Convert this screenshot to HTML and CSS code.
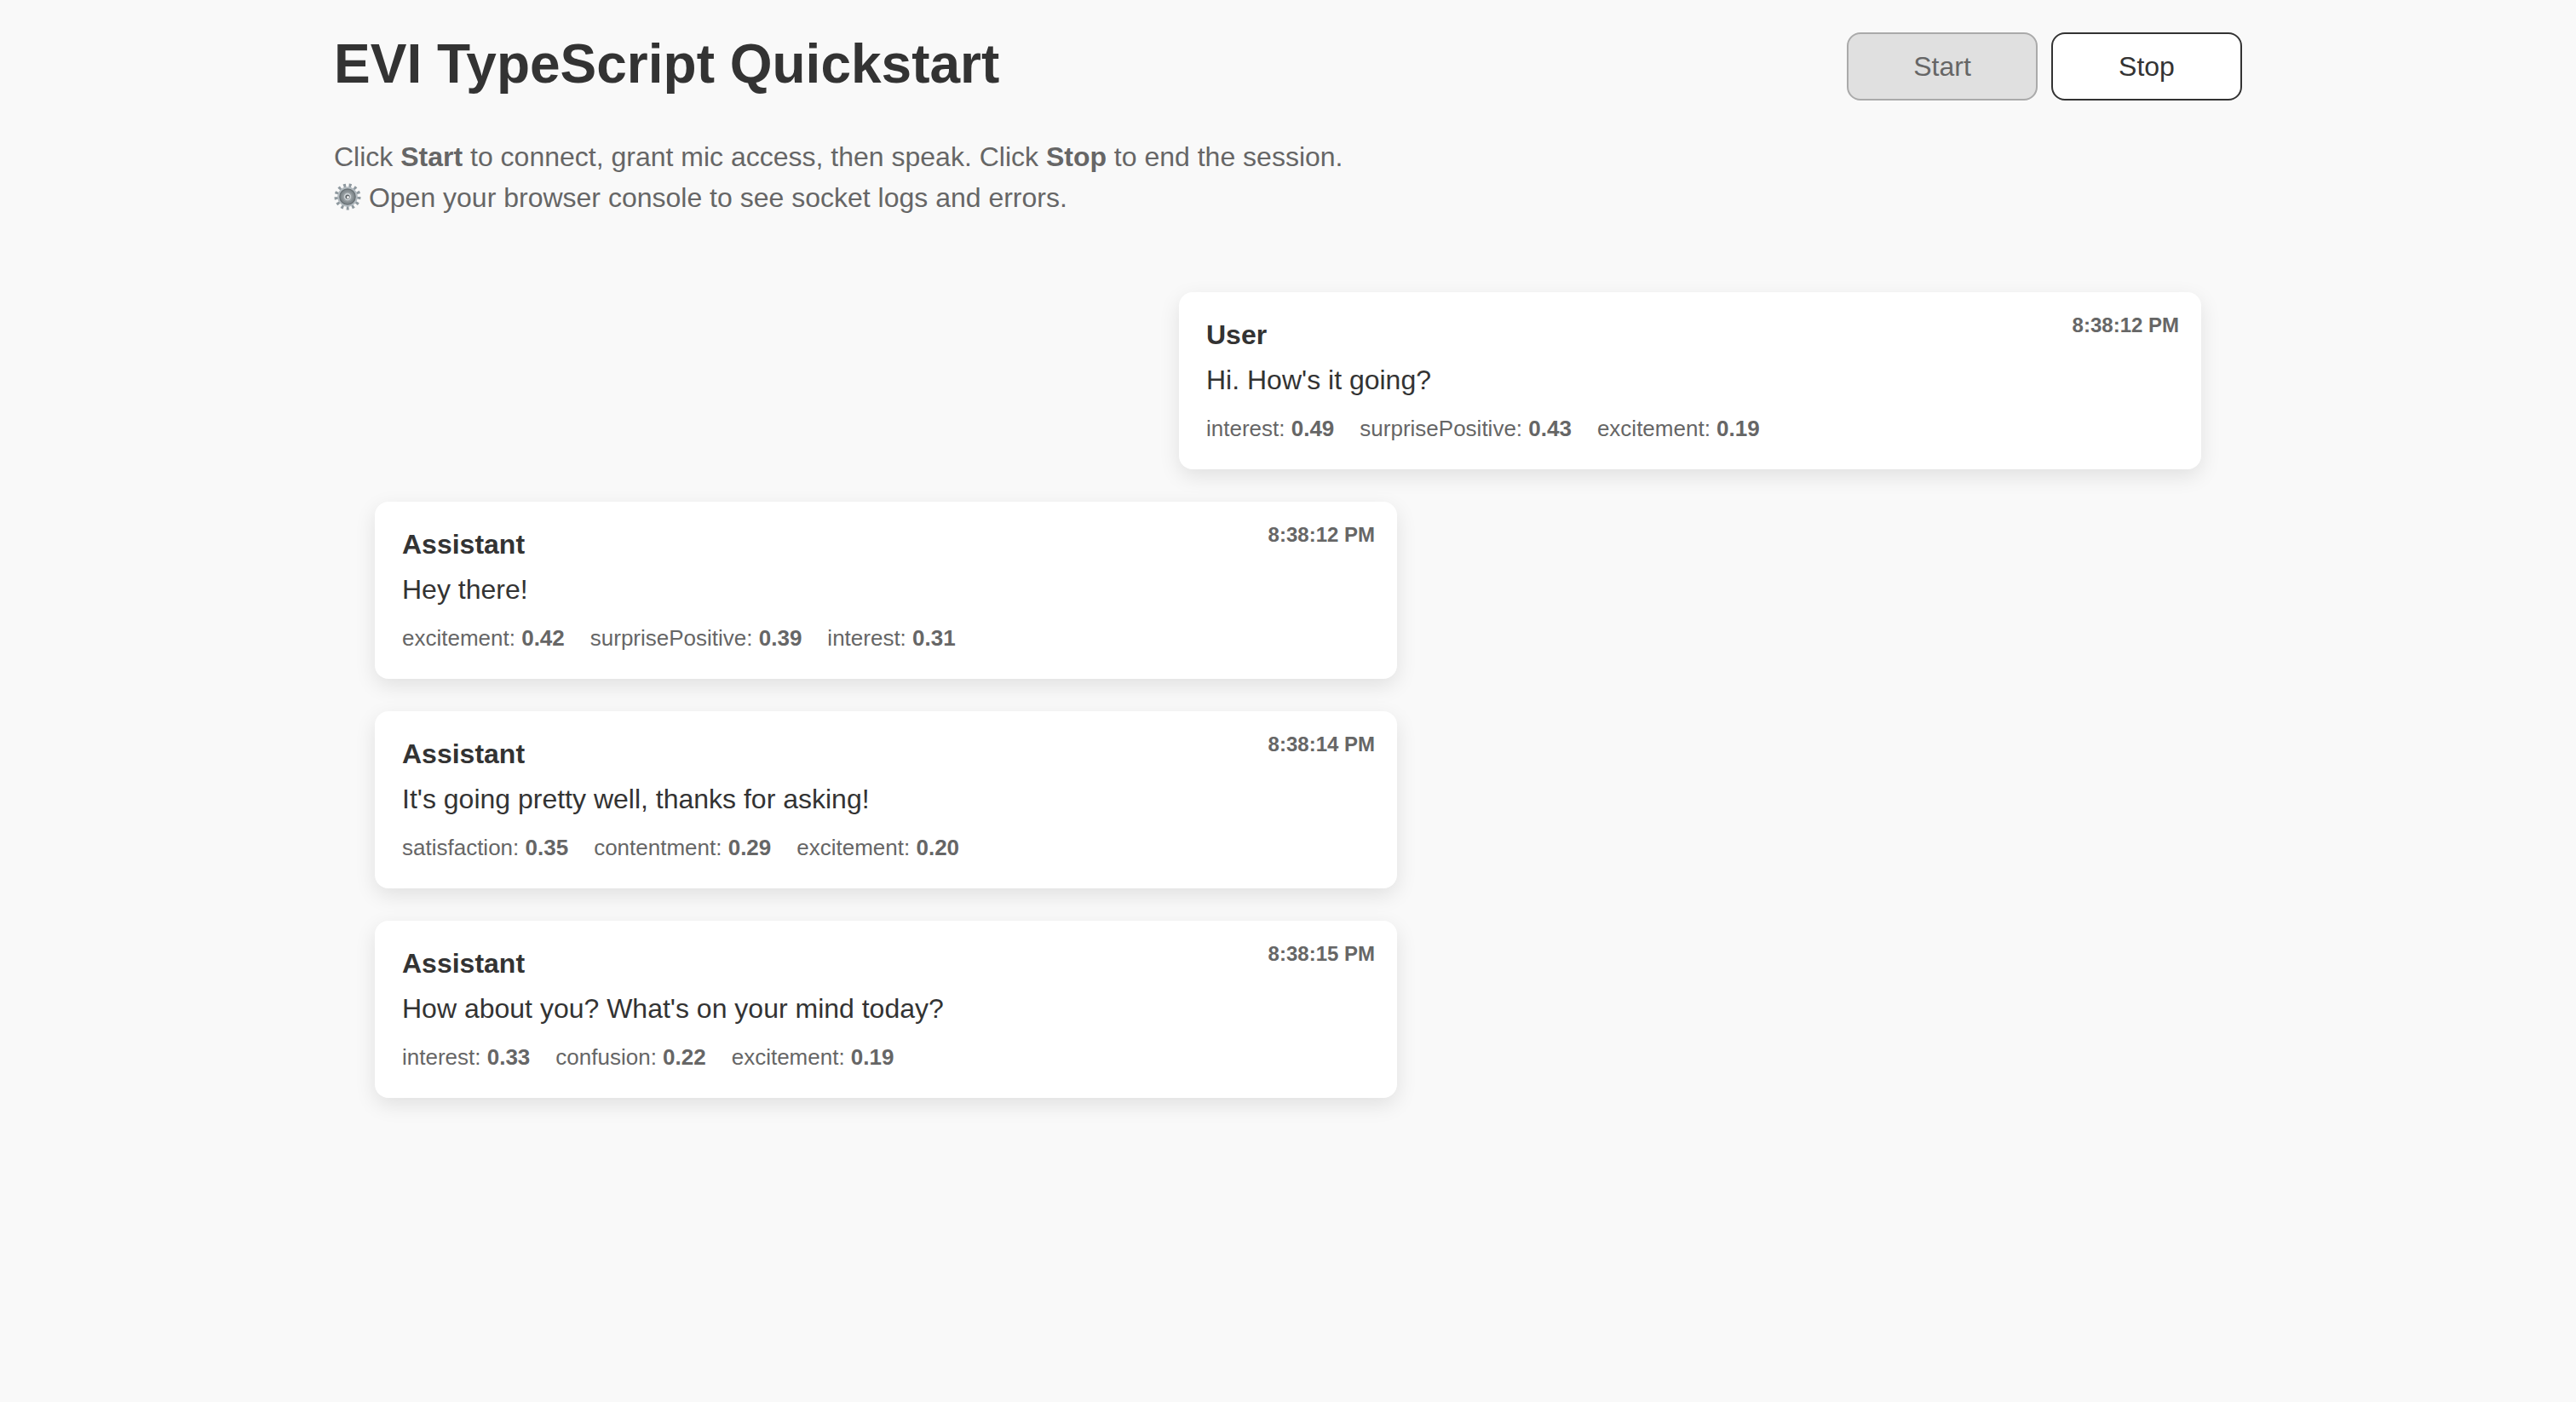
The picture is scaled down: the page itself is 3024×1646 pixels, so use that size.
FILE: index.html
```html
<!DOCTYPE html>
<html lang="en">
<head>
<meta charset="utf-8">
<meta name="viewport" content="width=device-width, initial-scale=1">
<title>EVI TypeScript Quickstart</title>
<link rel="stylesheet" href="styles.css">
</head>
<body>
<div class="app">
  <header class="header">
    <h1 class="title">EVI TypeScript Quickstart</h1>
    <div class="controls">
      <button class="btn" type="button" disabled>Start</button>
      <button class="btn" type="button">Stop</button>
    </div>
  </header>
  <p class="intro">Click <strong>Start</strong> to connect, grant mic access, then speak. Click <strong>Stop</strong> to end the session.<br>
    <svg class="gear" viewBox="0 0 32 32" aria-hidden="true">
      <circle cx="16" cy="16" r="13.2" fill="none" stroke="#8f999f" stroke-width="4.6" pathLength="26" stroke-dasharray="0.9 1.1"/>
      <circle cx="16" cy="16" r="11.8" fill="#b3bbc0"/>
      <circle cx="16" cy="16" r="9" fill="#858d91" stroke="#6c7478" stroke-width="1.6"/>
      <circle cx="16" cy="16" r="6" fill="#989fa2"/>
      <circle cx="16" cy="16" r="3.4" fill="#5c6265" stroke="#cdd3d7" stroke-width="1.6"/>
      <circle cx="16.5" cy="16.5" r="1.5" fill="#f4f4f4"/>
    </svg> Open your browser console to see socket logs and errors.</p>
  <main class="chat">
    <article class="card user">
      <h2 class="role">User</h2>
      <time class="time">8:38:12 PM</time>
      <p class="message">Hi. How's it going?</p>
      <ul class="scores"><li>interest: <strong>0.49</strong></li><li>surprisePositive: <strong>0.43</strong></li><li>excitement: <strong>0.19</strong></li></ul>
    </article>
    <article class="card">
      <h2 class="role">Assistant</h2>
      <time class="time">8:38:12 PM</time>
      <p class="message">Hey there!</p>
      <ul class="scores"><li>excitement: <strong>0.42</strong></li><li>surprisePositive: <strong>0.39</strong></li><li>interest: <strong>0.31</strong></li></ul>
    </article>
    <article class="card">
      <h2 class="role">Assistant</h2>
      <time class="time">8:38:14 PM</time>
      <p class="message">It's going pretty well, thanks for asking!</p>
      <ul class="scores"><li>satisfaction: <strong>0.35</strong></li><li>contentment: <strong>0.29</strong></li><li>excitement: <strong>0.20</strong></li></ul>
    </article>
    <article class="card">
      <h2 class="role">Assistant</h2>
      <time class="time">8:38:15 PM</time>
      <p class="message">How about you? What's on your mind today?</p>
      <ul class="scores"><li>interest: <strong>0.33</strong></li><li>confusion: <strong>0.22</strong></li><li>excitement: <strong>0.19</strong></li></ul>
    </article>
  </main>
</div>
</body>
</html>
```
FILE: styles.css
```css
* {
  box-sizing: border-box;
  margin: 0;
}

body {
  background: #f9f9f9;
  color: #333;
  font: 32px/48px "Liberation Sans", Arial, sans-serif;
}

.app {
  max-width: 2304px;
  margin: 0 auto;
  padding: 38px 32px;
}

.header {
  display: flex;
  justify-content: space-between;
  align-items: flex-start;
  gap: 32px;
}

.title {
  font-size: 64px;
  line-height: 74px;
}

.controls {
  display: flex;
  gap: 16px;
}

.btn {
  width: 224px;
  height: 80px;
  border: 2px solid #333;
  border-radius: 16px;
  background: #fff;
  color: #333;
  font: inherit;
}

.btn:disabled {
  border-color: #aaa;
  background: #e0e0e0;
  color: #666;
}

.intro {
  margin-top: 42px;
  color: #666;
}

.gear {
  width: 32px;
  height: 32px;
  vertical-align: -4px;
}

.chat {
  display: flex;
  flex-direction: column;
  align-items: flex-start;
  gap: 38px;
  margin-top: 39px;
  padding: 48px;
}

.card {
  position: relative;
  width: 100%;
  max-width: 1200px;
  padding: 24px 32px;
  border-radius: 16px;
  background: #fff;
  box-shadow: 0 8px 24px rgba(0, 0, 0, 0.1);
}

.user {
  align-self: flex-end;
}

.role {
  font-size: 32px;
  line-height: 53px;
}

.message {
  line-height: 53px;
}

.time {
  position: absolute;
  top: 24px;
  right: 26px;
  color: #666;
  font-size: 24px;
  font-weight: bold;
  line-height: 30px;
}

.scores {
  display: flex;
  flex-wrap: wrap;
  gap: 0 30px;
  padding: 10px 0 4px;
  list-style: none;
  color: #666;
  font-size: 26px;
  line-height: 40px;
}
```
